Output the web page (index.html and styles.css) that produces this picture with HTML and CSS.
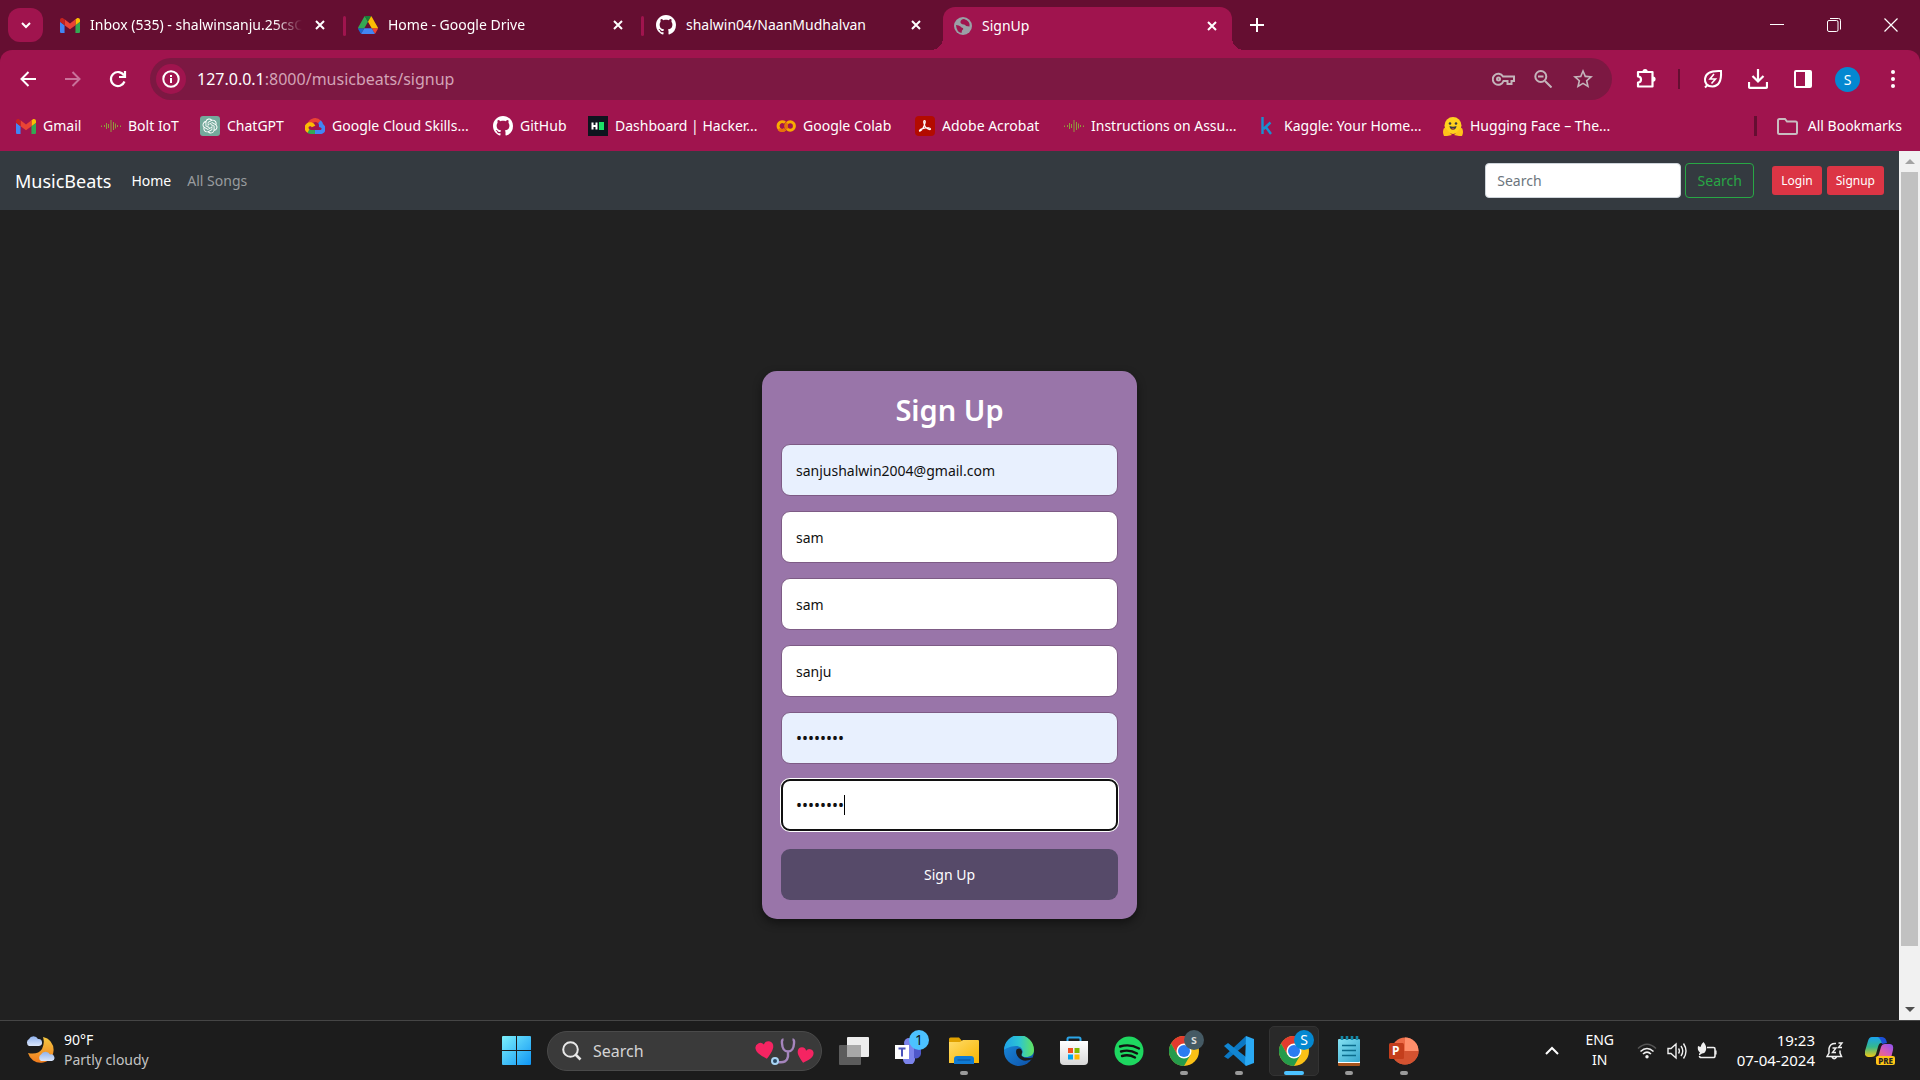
FILE: index.html
```
<!DOCTYPE html>
<html lang="en">
<head>
<meta charset="utf-8">
<meta name="viewport" content="width=device-width, initial-scale=1">
<title>SignUp</title>
<link rel="stylesheet" href="styles.css">
</head>
<body>

<svg class="defs" aria-hidden="true">
  <defs>
    <linearGradient id="g-win" x1="0" y1="0" x2="1" y2="1"><stop offset="0" stop-color="#7cf0fb"/><stop offset="1" stop-color="#0f95f5"/></linearGradient>
    <linearGradient id="g-moon" x1="0" y1="0" x2="0" y2="1"><stop offset="0" stop-color="#f5c842"/><stop offset="1" stop-color="#f07a1c"/></linearGradient>
    <linearGradient id="g-cloud" x1="0" y1="0" x2="0" y2="1"><stop offset="0" stop-color="#8fb2ee"/><stop offset="1" stop-color="#dbe6fb"/></linearGradient>
    <linearGradient id="g-edge" x1="0" y1="0" x2="1" y2="0"><stop offset="0" stop-color="#1fa2e8"/><stop offset="0.5" stop-color="#2cc4d4"/><stop offset="1" stop-color="#63e45c"/></linearGradient>
    <linearGradient id="g-edge2" x1="0" y1="0" x2="1" y2="1"><stop offset="0" stop-color="#1b8fdf"/><stop offset="1" stop-color="#0d4ea6"/></linearGradient>
    <linearGradient id="g-folder" x1="0" y1="0" x2="1" y2="1"><stop offset="0" stop-color="#ffdc6a"/><stop offset="1" stop-color="#f8b500"/></linearGradient>
    <linearGradient id="g-bag" x1="0" y1="0" x2="0" y2="1"><stop offset="0" stop-color="#ffffff"/><stop offset="1" stop-color="#d8d8d8"/></linearGradient>
    <linearGradient id="g-note" x1="0" y1="0" x2="1" y2="1"><stop offset="0" stop-color="#84e2f3"/><stop offset="1" stop-color="#36a5cc"/></linearGradient>
    <linearGradient id="g-cop1" x1="0" y1="0" x2="0" y2="1"><stop offset="0" stop-color="#1aa3ee"/><stop offset="0.5" stop-color="#35b98c"/><stop offset="1" stop-color="#f3c713"/></linearGradient>
    <linearGradient id="g-cop2" x1="1" y1="0" x2="0" y2="1"><stop offset="0" stop-color="#8b52f4"/><stop offset="0.5" stop-color="#d95cb4"/><stop offset="1" stop-color="#fb7d4b"/></linearGradient>
    <symbol id="i-close" viewBox="0 0 12 12"><path d="M2 2l8 8M10 2l-8 8" stroke="currentColor" stroke-width="2" fill="none"/></symbol>
    <symbol id="i-gmail" viewBox="52 42 88 66">
      <path fill="#4285f4" d="M58 108h14V74L52 59v43c0 3.32 2.69 6 6 6"/><path fill="#34a853" d="M120 108h14c3.32 0 6-2.69 6-6V59l-20 15"/>
      <path fill="#fbbc04" d="M120 48v26l20-15v-8c0-7.42-8.47-11.65-14.4-7.2"/><path fill="#ea4335" d="M72 74V48l24 18 24-18v26L96 92"/>
      <path fill="#c5221f" d="M52 51v8l20 15V48l-5.6-4.2c-5.94-4.45-14.4-.22-14.4 7.2"/>
    </symbol>
    <symbol id="i-github" viewBox="0 0 16 16"><path fill="#fff" d="M8 0C3.58 0 0 3.58 0 8c0 3.54 2.29 6.53 5.47 7.59.4.07.55-.17.55-.38 0-.19-.01-.82-.01-1.49-2.01.37-2.53-.49-2.69-.94-.09-.23-.48-.94-.82-1.13-.28-.15-.68-.52-.01-.53.63-.01 1.08.58 1.23.82.72 1.21 1.87.87 2.33.66.07-.52.28-.87.51-1.07-1.78-.2-3.64-.89-3.64-3.95 0-.87.31-1.59.82-2.15-.08-.2-.36-1.02.08-2.12 0 0 .67-.21 2.2.82.64-.18 1.32-.27 2-.27s1.36.09 2 .27c1.53-1.04 2.2-.82 2.2-.82.44 1.1.16 1.92.08 2.12.51.56.82 1.27.82 2.15 0 3.07-1.87 3.75-3.65 3.95.29.25.54.73.54 1.48 0 1.07-.01 1.93-.01 2.2 0 .21.15.46.55.38A8.01 8.01 0 0 0 16 8c0-4.42-3.58-8-8-8z"/></symbol>
    <symbol id="i-bolt" viewBox="0 0 20 12"><path d="M.5 5.500v1.500M3.500 5v2M5.500 3v6M7.500 4v4M10 0v12M12.500 2v8M14.500 3.500v5M16.500 5v2M19.500 5.500v1.500" stroke="#8f9b3c" stroke-width="1"/></symbol>
    <symbol id="i-chrome" viewBox="0 0 30 30">
      <circle cx="15" cy="15" r="15" fill="#fbc116"/>
      <path fill="#e33b2e" d="M2 7.5A15 15 0 0 1 28 7.5H15L8.5 18.7z"/>
      <path fill="#259b4b" d="M2 7.5A15 15 0 0 0 15 30L21.5 18.7 8.5 18.7z"/>
      <circle cx="15" cy="15" r="7.5" fill="#fff"/><circle cx="15" cy="15" r="6" fill="#2a7cf0"/>
    </symbol>
  </defs>
</svg>

<header class="browser">
  <div class="tabstrip">
    <button class="tab-search" aria-label="Search tabs"><svg width="12" height="12" viewBox="0 0 12 12"><path d="M2 4l4 4 4-4" fill="none" stroke="currentColor" stroke-width="2"/></svg></button>
    <div class="tab tab-divided">
      <svg class="tab-icon" width="20" height="15"><use href="#i-gmail"/></svg>
      <span class="tab-title">Inbox (535) - shalwinsanju.25csC</span>
      <button class="tab-close" aria-label="Close tab"><svg width="12" height="12"><use href="#i-close"/></svg></button>
    </div>
    <div class="tab tab-divided">
      <svg class="tab-icon" width="20" height="18" viewBox="0 0 87.3 78">
        <path fill="#1967d2" d="M6.6 66.85l3.85 6.65c.8 1.4 1.95 2.5 3.3 3.3l13.75-23.8h-27.5c0 1.55.4 3.1 1.2 4.5z"/>
        <path fill="#34a853" d="M43.65 25L29.9 1.2c-1.35.8-2.5 1.9-3.3 3.3L1.2 48.5A9.06 9.06 0 0 0 0 53h27.5z"/>
        <path fill="#ea4335" d="M73.55 76.8c1.35-.8 2.5-1.9 3.3-3.3l1.6-2.75L86.1 57.5c.8-1.4 1.2-2.95 1.2-4.5H59.8l5.85 11.5z"/>
        <path fill="#188038" d="M43.65 25L57.4 1.2C56.05.4 54.5 0 52.9 0H34.4c-1.6 0-3.15.45-4.5 1.2z"/>
        <path fill="#4285f4" d="M59.8 53H27.5L13.75 76.8c1.35.8 2.9 1.2 4.5 1.2h50.8c1.6 0 3.15-.45 4.5-1.2z"/>
        <path fill="#fbbc04" d="M73.4 26.5L60.7 4.5c-.8-1.4-1.95-2.5-3.3-3.3L43.65 25 59.8 53h27.45c0-1.55-.4-3.1-1.2-4.5z"/>
      </svg>
      <span class="tab-title">Home - Google Drive</span>
      <button class="tab-close" aria-label="Close tab"><svg width="12" height="12"><use href="#i-close"/></svg></button>
    </div>
    <div class="tab">
      <svg class="tab-icon" width="20" height="20"><use href="#i-github"/></svg>
      <span class="tab-title">shalwin04/NaanMudhalvan</span>
      <button class="tab-close" aria-label="Close tab"><svg width="12" height="12"><use href="#i-close"/></svg></button>
    </div>
    <div class="tab tab-active">
      <svg class="tab-icon" width="18" height="18" viewBox="0 0 18 18"><circle cx="9" cy="9" r="9" fill="#9aa0a6"/><path d="M2 8q3 0 4.500 1.500T9 11q1 1-1 2.500l-.5 2.500Q2.500 15 2 8zM10 2q-3 0-3.500 2.500T10 7.500q1.500 0 2 1.500l3.500.5Q16.500 4 10 2z" fill="#a0144e"/></svg>
      <span class="tab-title">SignUp</span>
      <button class="tab-close" aria-label="Close tab"><svg width="12" height="12"><use href="#i-close"/></svg></button>
    </div>
    <button class="new-tab" aria-label="New tab"><svg width="14" height="14" viewBox="0 0 14 14"><path d="M7 0v14M0 7h14" stroke="currentColor" stroke-width="2"/></svg></button>
    <div class="window-controls">
      <button aria-label="Minimise"><svg width="14" height="14" viewBox="0 0 14 14"><path d="M0 6.500h14" stroke="currentColor"/></svg></button>
      <button aria-label="Restore"><svg width="14" height="14" viewBox="0 0 14 14" fill="none" stroke="currentColor"><rect x="0.500" y="2.500" width="10.500" height="11" rx="1.500"/><path d="M3 .5h8.500a2 2 0 0 1 2 2V11.500"/></svg></button>
      <button aria-label="Close"><svg width="14" height="14" viewBox="0 0 14 14"><path d="M.5.5l13 13M13.500.5l-13 13" stroke="currentColor" stroke-width="1.200"/></svg></button>
    </div>
  </div>

  <div class="toolbar">
    <button class="tool" aria-label="Back"><svg width="16" height="16" viewBox="0 0 16 16" fill="none" stroke="currentColor" stroke-width="2"><path d="M16 8H2M8.500 1L1.500 8l7 7"/></svg></button>
    <button class="tool tool-dim" aria-label="Forward"><svg width="16" height="16" viewBox="0 0 16 16" fill="none" stroke="currentColor" stroke-width="2"><path d="M0 8h14M7.500 1l7 7-7 7"/></svg></button>
    <button class="tool" aria-label="Reload"><svg width="18" height="18" viewBox="0 0 18 18" fill="none" stroke="currentColor" stroke-width="2.200"><path d="M15.500 11.500A7 7 0 1 1 15 5.500M16 1v6h-6"/></svg></button>
    <div class="omnibox">
      <button class="site-info" aria-label="Site information"><svg width="18" height="18" viewBox="0 0 18 18"><circle cx="9" cy="9" r="7.700" fill="none" stroke="currentColor" stroke-width="2"/><path d="M9 8v5M9 5v2" stroke="currentColor" stroke-width="2"/></svg></button>
      <div class="url" role="textbox" aria-label="Address"><span class="url-host">127.0.0.1</span>:8000/musicbeats/signup</div>
      <button class="omni-btn" aria-label="Passwords"><svg width="23" height="14" viewBox="0 0 23 14" fill="none" stroke="currentColor" stroke-width="2"><path d="M11 4.500h11v4.500h-2.500v3h-4v-3H11.500A5.500 5.500 0 1 1 11 4.500z"/><circle cx="6.500" cy="7" r="1.500"/></svg></button>
      <button class="omni-btn" aria-label="Zoom"><svg width="18" height="18" viewBox="0 0 18 18" fill="none" stroke="currentColor" stroke-width="2"><circle cx="6.800" cy="6.500" r="5.500"/><path d="M11 11l6.500 6.500M4 6.500h5.500"/></svg></button>
      <button class="omni-btn" aria-label="Bookmark"><svg width="20" height="20" viewBox="2 2 20 20"><path fill="currentColor" d="M22 9.240l-7.190-.62L12 2 9.190 8.630 2 9.240l5.460 4.730L5.820 21 12 17.270 18.180 21l-1.630-7.030L22 9.240zM12 15.400l-3.760 2.270 1-4.280-3.320-2.880 4.380-.38L12 6.100l1.710 4.040 4.380.38-3.320 2.880 1 4.280L12 15.400z"/></svg></button>
    </div>
    <button class="tool tool-ext" aria-label="Extensions"><svg width="22" height="22" viewBox="0 0 22 22"><path d="M3 4h14.500v14.500H3v-4a3 3 0 0 0 0-6z" fill="none" stroke="currentColor" stroke-width="2.200" stroke-linejoin="round"/><path d="M7.500 3.500a2.600 2.600 0 0 1 5.200 0zM18 8.500a2.600 2.600 0 0 1 0 5.200z" fill="currentColor"/></svg></button>
    <span class="tool-divider"></span>
    <button class="tool" aria-label="Energy saver"><svg width="20" height="20" viewBox="0 0 20 20" fill="none" stroke="currentColor" stroke-width="2"><path d="M18 2c.5 8-1 15-8.500 15.500C4 17.500 1.500 14 2 10 2.500 4 9 1.500 18 2zM2 18.500l3-3"/><path d="M11 5l-4 5h5.500L8.500 14.500" stroke-width="1.600"/></svg></button>
    <button class="tool" aria-label="Downloads"><svg width="20" height="20" viewBox="0 0 20 20" fill="none" stroke="currentColor" stroke-width="2.200"><path d="M10 0v12M4.500 7l5.500 5.500L15.500 7M1 13v4.500a1.300 1.300 0 0 0 1.300 1.300h15.400a1.300 1.300 0 0 0 1.300-1.300V13"/></svg></button>
    <button class="tool" aria-label="Side panel"><svg width="18" height="18" viewBox="0 0 18 18"><rect x="1" y="1" width="16" height="16" rx="1" fill="none" stroke="currentColor" stroke-width="2"/><path d="M11 1h6v16h-6z" fill="currentColor"/></svg></button>
    <button class="tool" aria-label="Profile"><span class="avatar">S</span></button>
    <button class="tool" aria-label="Menu"><svg width="4" height="18" viewBox="0 0 4 18" fill="currentColor"><circle cx="2" cy="2" r="2"/><circle cx="2" cy="9" r="2"/><circle cx="2" cy="16" r="2"/></svg></button>
  </div>

  <nav class="bookmarks" aria-label="Bookmarks">
    <a href="#"><svg width="20" height="15"><use href="#i-gmail"/></svg>Gmail</a>
    <a href="#"><svg width="20" height="12"><use href="#i-bolt"/></svg>Bolt IoT</a>
    <a href="#"><svg width="20" height="20" viewBox="0 0 20 20"><rect width="20" height="20" rx="3" fill="#74aa9c"/><path fill="#fff" transform="translate(2.500 2.500) scale(.625)" d="M22.2819 9.8211a5.9847 5.9847 0 0 0-.5157-4.9108 6.0462 6.0462 0 0 0-6.5098-2.9A6.0651 6.0651 0 0 0 4.9807 4.1818a5.9847 5.9847 0 0 0-3.9977 2.9 6.0462 6.0462 0 0 0 .7427 7.0966 5.98 5.98 0 0 0 .511 4.9107 6.051 6.051 0 0 0 6.5146 2.9001A5.9847 5.9847 0 0 0 13.2599 24a6.0557 6.0557 0 0 0 5.7718-4.2058 5.9894 5.9894 0 0 0 3.9977-2.9001 6.0557 6.0557 0 0 0-.7475-7.0729zm-9.022 12.6081a4.4755 4.4755 0 0 1-2.8764-1.0408l.1419-.0804 4.7783-2.7582a.7948.7948 0 0 0 .3927-.6813v-6.7369l2.02 1.1686a.071.071 0 0 1 .038.052v5.5826a4.504 4.504 0 0 1-4.4945 4.4944zm-9.6607-4.1254a4.4708 4.4708 0 0 1-.5346-3.0137l.142.0852 4.783 2.7582a.7712.7712 0 0 0 .7806 0l5.8428-3.3685v2.3324a.0804.0804 0 0 1-.0332.0615L9.74 19.9502a4.4992 4.4992 0 0 1-6.1408-1.6464zM2.3408 7.8956a4.485 4.485 0 0 1 2.3655-1.9728V11.6a.7664.7664 0 0 0 .3879.6765l5.8144 3.3543-2.0201 1.1685a.0757.0757 0 0 1-.071 0l-4.8303-2.7865A4.504 4.504 0 0 1 2.3408 7.872zm16.5963 3.8558L13.1038 8.364 15.1192 7.2a.0757.0757 0 0 1 .071 0l4.8303 2.7913a4.4944 4.4944 0 0 1-.6765 8.1042v-5.6772a.79.79 0 0 0-.407-.667zm2.0107-3.0231l-.142-.0852-4.7735-2.7818a.7759.7759 0 0 0-.7854 0L9.409 9.2297V6.8974a.0662.0662 0 0 1 .0284-.0615l4.8303-2.7866a4.4992 4.4992 0 0 1 6.6802 4.66zM8.3065 12.863l-2.02-1.1638a.0804.0804 0 0 1-.038-.0567V6.0742a4.4992 4.4992 0 0 1 7.3757-3.4537l-.142.0805L8.704 5.459a.7948.7948 0 0 0-.3927.6813zm1.0976-2.3654l2.602-1.4998 2.6069 1.4998v2.9994l-2.5974 1.4997-2.6067-1.4997Z"/></svg>ChatGPT</a>
    <a href="#"><svg width="20" height="16" viewBox="0 0 20 16" fill="none" stroke-width="4"><path d="M4.500 6A6 6 0 0 1 14.500 4" stroke="#ea4335"/><path d="M14.500 3.700Q16 5 16 7.500A3.300 3.300 0 0 1 14.500 14H10" stroke="#4285f4"/><path d="M10 14H6a4 4 0 0 1-3-1.500" stroke="#34a853"/><path d="M3.500 13A3.600 3.600 0 1 1 8.500 8.500" stroke="#fbbc04"/></svg>Google Cloud Skills...</a>
    <a href="#"><svg width="20" height="20"><use href="#i-github"/></svg>GitHub</a>
    <a href="#"><svg width="20" height="20" viewBox="0 0 20 20"><rect width="20" height="20" fill="#0e141e"/><path d="M4.500 6.500v7M8.500 6.500v7M4 10h5" stroke="#fff" stroke-width="2"/><path d="M11 6h5v8h-5z" fill="#1be167"/></svg>Dashboard | Hacker...</a>
    <a href="#"><svg width="20" height="12" viewBox="0 0 20 12" fill="none" stroke-width="3"><circle cx="14.200" cy="6" r="4.200" stroke="#f9ab00"/><path d="M9 2.600A4.300 4.300 0 1 0 9 9.400" stroke="#f9ab00"/><path d="M11.200 9A4.200 4.200 0 0 1 11.200 3M2.800 9A4.300 4.300 0 0 0 9 9.400" stroke="#e8710a"/></svg>Google Colab</a>
    <a href="#"><svg width="20" height="20" viewBox="0 0 20 20"><rect width="20" height="20" rx="4" fill="#b30b00"/><path d="M9.500 4.500c1.500 0 .5 4-1.500 7.500-1.500 2.500-3 3.500-3.500 3-.8-1 3.500-3 6-3.200 2-.2 5 .2 5 1.200 0 1.500-3.500 0-5-2-1.500-2-2.500-6.500-1-6.500z" fill="none" stroke="#fff" stroke-width="1.200"/></svg>Adobe Acrobat</a>
    <a href="#"><svg width="20" height="12"><use href="#i-bolt"/></svg>Instructions on Assu...</a>
    <a href="#"><svg width="20" height="20" viewBox="0 0 20 20"><path d="M5.500 1v17M13.500 6.500l-7 6.500M8.500 10.500l5.500 7.500" stroke="#1a8fd0" stroke-width="2.400" fill="none"/></svg>Kaggle: Your Home...</a>
    <a href="#"><svg width="20" height="19" viewBox="0 0 20 19"><circle cx="10" cy="8.500" r="8.500" fill="#ffd21e"/><path d="M1 11q2 0 5 4l3 3-5 1H1q-2-4 0-8zM19 11q-2 0-5 4l-3 3 5 1h3q2-4 0-8z" fill="#ffc21a"/><circle cx="7" cy="6.500" r="1.300" fill="#3a3b45"/><circle cx="13" cy="6.500" r="1.300" fill="#3a3b45"/><path d="M6.500 9q3.500 1.500 7 0-.5 3.800-3.500 3.800T6.500 9z" fill="#3a3b45"/><path d="M8.500 11.800q1.500-1 3 0-1.500 1.500-3 0z" fill="#f04e3e"/></svg>Hugging Face – The...</a>
    <a href="#" class="all-bookmarks"><svg width="21" height="17" viewBox="0 0 21 17"><path d="M1 2.500A1.500 1.500 0 0 1 2.500 1H8l2 2.500h8.500A1.500 1.500 0 0 1 20 5v9.500a1.500 1.500 0 0 1-1.500 1.500h-16A1.500 1.500 0 0 1 1 14.500z" fill="none" stroke="#c9bcc0" stroke-width="2"/></svg>All Bookmarks</a>
  </nav>
</header>

<div class="viewport">
  <div class="page">
    <nav class="navbar">
      <a href="#" class="brand">MusicBeats</a>
      <a href="#" class="nav-link nav-active">Home</a>
      <a href="#" class="nav-link">All Songs</a>
      <form class="nav-search">
        <input type="search" placeholder="Search" aria-label="Search">
        <button type="button" class="btn-outline">Search</button>
      </form>
      <div class="nav-auth">
        <button class="btn-danger">Login</button>
        <button class="btn-danger">Signup</button>
      </div>
    </nav>
    <main class="content">
      <form class="card">
        <h1>Sign Up</h1>
        <div class="fields">
          <input class="field field-filled" type="email" aria-label="Email" value="sanjushalwin2004@gmail.com">
          <input class="field" type="text" aria-label="Username" value="sam">
          <input class="field" type="text" aria-label="First name" value="sam">
          <input class="field" type="text" aria-label="Last name" value="sanju">
          <input class="field field-filled field-password" type="password" aria-label="Password" value="password">
          <div class="field-wrap">
            <input class="field field-password field-focused" type="password" aria-label="Confirm password" value="password">
            <span class="caret"></span>
          </div>
        </div>
        <button type="button" class="submit">Sign Up</button>
      </form>
    </main>
  </div>
  <div class="scrollbar" aria-hidden="true">
    <svg width="10" height="21" viewBox="0 0 10 21"><path d="M0 13l5-5 5 5z" fill="#a3a3a3"/></svg>
    <div class="scroll-track"><div class="scroll-thumb"></div></div>
    <svg width="10" height="21" viewBox="0 0 10 21"><path d="M0 8l5 5 5-5z" fill="#505050"/></svg>
  </div>
</div>

<footer class="taskbar">
  <button class="weather">
    <svg width="30" height="28" viewBox="0 0 30 28"><path d="M18 2A13 13 0 1 1 3 18q10 2 14-4 3-6 1-12z" fill="url(#g-moon)"/><path d="M4 11a4 4 0 0 1 0-7 5 5 0 0 1 9 0 3.500 3.500 0 0 1 1 7z" fill="url(#g-cloud)"/><path d="M16 26a3.800 3.800 0 0 1 0-6.500 5 5 0 0 1 9 0 3.300 3.300 0 0 1 2 6.500z" fill="url(#g-cloud)"/></svg>
    <span class="weather-text"><span>90°F</span><span class="muted">Partly cloudy</span></span>
  </button>

  <div class="apps">
    <button class="app" aria-label="Start"><svg width="29" height="29" viewBox="0 0 29 29"><path fill="url(#g-win)" d="M1 0h13v14H0V1a1 1 0 0 1 1-1zM15 0h13a1 1 0 0 1 1 1v13H15zM0 15h14v14H1a1 1 0 0 1-1-1zM15 15h14v13a1 1 0 0 1-1 1H15z"/></svg></button>
    <button class="search-pill">
      <svg width="20" height="20" viewBox="0 0 20 20" fill="none" stroke="#e8e8e8" stroke-width="2"><circle cx="8.500" cy="8.500" r="7.300" fill="#4a4a4a"/><path d="M13.500 13.500l5 5" stroke-width="2.600"/></svg>
      <span>Search</span>
      <svg class="pill-art" width="60" height="28" viewBox="0 0 60 28"><g fill="#f52462"><path transform="rotate(-12 10 13)" d="M10 22C3 16 1 13 1 9.500A4.800 4.800 0 0 1 10 7.500 4.800 4.800 0 0 1 19 9.500C19 13 17 16 10 22z"/><path transform="rotate(14 50 18)" d="M50 26c-6-5-8-7.500-8-10.800a4.200 4.200 0 0 1 8-1.700 4.200 4.200 0 0 1 8 1.700c0 3.300-2 5.800-8 10.800z"/></g><path d="M28.500 2.500q-2 0-1.500 4 .5 8 6 8t6-8q.5-4-1.500-4M33 14.500v5q-1 7-10 5.500" fill="none" stroke="#a585bd" stroke-width="2.400"/><circle cx="20" cy="24" r="3" fill="#2a4a66" stroke="#a8d4f4" stroke-width="2"/></svg>
    </button>
    <button class="app" aria-label="Task view"><svg width="30" height="28" viewBox="0 0 30 28"><rect x="8" width="22" height="20" rx="1" fill="#ededed"/><rect y="8" width="22" height="20" rx="1" fill="#5c5c5c"/><path d="M8 8h14v12H8z" fill="#a8a8a8"/></svg></button>
    <button class="app" aria-label="Teams"><svg width="30" height="26" viewBox="0 0 30 26"><circle cx="15" cy="5" r="5" fill="#7b83eb"/><path d="M9 8h12v12a6 6 0 0 1-12 2z" fill="#7b83eb"/><path d="M20 8h7v8a5 5 0 0 1-7 4z" fill="#4f58ca"/><rect x="1" y="7" width="14" height="14" fill="#fff"/><path d="M4.500 10.500h7M8 10.500v8" stroke="#4b53bc" stroke-width="2"/></svg><span class="badge badge-count">1</span></button>
    <button class="app app-open" aria-label="File Explorer"><svg width="30" height="28" viewBox="0 0 30 28"><path d="M0 2a1.500 1.500 0 0 1 1.500-1.500H10L13 4h15a1.500 1.500 0 0 1 1.500 1.500V10H0z" fill="#e0a100"/><path d="M0 5h11l3-2h15a1 1 0 0 1 1 1v22H0z" fill="url(#g-folder)"/><path d="M5 27v-5a3 3 0 0 1 3-3h14a3 3 0 0 1 3 3v5z" fill="#0f7bd4"/><path d="M8.500 23h13" stroke="#0a4f96"/></svg></button>
    <button class="app" aria-label="Edge"><svg width="30" height="30" viewBox="0 0 30 30"><circle cx="15" cy="15" r="15" fill="url(#g-edge2)"/><path d="M0 14A15 15 0 0 1 30 14c0 5-4 7-8 7-3 0-5-1-4-3 2-4-1-8-6-8-6 0-11 3-12 4z" fill="url(#g-edge)"/><path d="M12.500 13.500q4-2.500 5.500 1.500c.8 2-1.500 3.500 0 5.200q3.500 3 10.500 1.300l-1 2q-9 3-13-2-3.500-4-2-8z" fill="#1c1c1c"/></svg></button>
    <button class="app" aria-label="Microsoft Store"><svg width="30" height="30" viewBox="0 0 30 30"><path d="M8.500 7V3a1.500 1.500 0 0 1 1.500-1.500h10A1.500 1.500 0 0 1 21.500 3v4" fill="none" stroke="#2ba5e8" stroke-width="2"/><path d="M1 5h28v20a4 4 0 0 1-4 4H5a4 4 0 0 1-4-4z" fill="url(#g-bag)"/><path d="M9 12h5v5H9z" fill="#f25022"/><path d="M15.500 12h5v5h-5z" fill="#7fba00"/><path d="M9 18.500h5v5H9z" fill="#00a4ef"/><path d="M15.500 18.500h5v5h-5z" fill="#ffb900"/></svg></button>
    <button class="app" aria-label="Spotify"><svg width="30" height="30" viewBox="0 0 30 30"><circle cx="15" cy="15" r="14.500" fill="#1ed760"/><path d="M6 10.500q10-3 19 2M7 15.500q8.500-2.500 16 2M8 20q7-2 13 1.500" fill="none" stroke="#111" stroke-width="2.400" stroke-linecap="round"/></svg></button>
    <button class="app app-open" aria-label="Chrome"><svg width="30" height="30"><use href="#i-chrome"/></svg><span class="badge badge-grey">s</span></button>
    <button class="app app-open" aria-label="Visual Studio Code"><svg width="30" height="30" viewBox="0 0 30 30"><path d="M0 20.500L22 0v8L4 23z" fill="#0b77c2"/><path d="M4 7l18 14v9L0 10z" fill="#1186d3"/><path d="M22 0l8 3v24l-8 3-1-2z" fill="#2aa9f3"/></svg></button>
    <button class="app app-current" aria-label="Chrome, active"><svg width="30" height="30"><use href="#i-chrome"/></svg><span class="badge badge-blue">S</span></button>
    <button class="app app-open" aria-label="Notepad"><svg width="22" height="30" viewBox="0 0 22 30"><rect y="24" width="22" height="6" rx="1" fill="#a8541c"/><path d="M0 24h22v3H0z" fill="#fff"/><rect y="3" width="22" height="23" rx="1" fill="url(#g-note)"/><path d="M4 9.500h14M4 14.500h14M4 19.500h14" stroke="#0b6c8c" stroke-width="1.600"/><path d="M4 0v4M9 0v4M14 0v4M19 0v4" stroke="#1389a8" stroke-width="2.600"/></svg></button>
    <button class="app app-open" aria-label="PowerPoint"><svg width="30" height="30" viewBox="0 0 30 30"><circle cx="16" cy="15" r="13.500" fill="#ed6c47"/><path d="M16 1.500A13.500 13.500 0 0 1 29.500 15H16z" fill="#ff8f6b"/><path d="M2.500 15h27a13.500 13.500 0 0 1-27 0z" fill="#d35230"/><rect y="7" width="15" height="16" rx="1.500" fill="#c43e1c"/><text class="ppt-letter" x="3" y="19">P</text></svg></button>
  </div>

  <div class="tray">
    <button class="tray-up" aria-label="Hidden icons"><svg width="14" height="9" viewBox="0 0 14 9"><path d="M1 8l6-6 6 6" fill="none" stroke="#fff" stroke-width="2"/></svg></button>
    <span class="lang"><span>ENG</span><span>IN</span></span>
    <button class="status" aria-label="Network, volume, battery">
      <svg width="20" height="16" viewBox="0 0 20 16" fill="none" stroke="#f0f0f0" stroke-width="1.600"><path d="M1 5.500q9-8.500 18 0" stroke="#555"/><path d="M3.500 8.500q6.500-6 13 0M6 11q4-3.800 8 0"/><circle cx="10" cy="13.800" r="1.700" fill="#f0f0f0" stroke="none"/></svg>
      <svg width="20" height="18" viewBox="0 0 20 18" fill="none" stroke="#f0f0f0" stroke-width="1.400"><path d="M1 6.500h3L9 2v14L4 11.500H1zM11.500 6.500q1.800 2.500 0 5M14 4q3.500 5 0 10M16.500 1.500q5 7.500 0 15"/></svg>
      <svg width="20" height="18" viewBox="0 0 20 18"><path d="M10 5.500h6.500a1.500 1.500 0 0 1 1.500 1.500v7a1.500 1.500 0 0 1-1.500 1.500H4A1.500 1.500 0 0 1 2.500 14M18.800 8.500v4" fill="none" stroke="#f0f0f0" stroke-width="1.600"/><path d="M6.500 0Q10 4 9 8q-1 3.500-4 3.500l-3 2q-.5-1.500 1-3Q0 8 1 4l2.500 1Q4 2 6.500 0z" fill="#f0f0f0"/></svg>
    </button>
    <span class="clock"><span>19:23</span><span>07-04-2024</span></span>
    <svg class="bell" width="18" height="18" viewBox="0 0 18 18" fill="none" stroke="#f0f0f0" stroke-width="1.500"><path d="M10 1.500q-6-.5-7 5V11l-2 3.500h14.500L14 11V8.500M6 15q2.200 3.500 4.500 0"/><path d="M6.500 6h3.500L6.500 10.500h3.500M12.500 1H16l-3.500 4.500H16" stroke-width="1.400"/></svg>
    <button class="copilot" aria-label="Copilot"><svg width="30" height="28" viewBox="0 0 30 28"><path d="M7 0h8q4 0 6 6h-5q-2 0-3 4l-2 7q-1 3-5 3H3q-4 0-3-6l3-10q1-4 4-4z" fill="url(#g-cop1)"/><path d="M13 0h4q4 0 5 6l-5 1q-1-5-4-7z" fill="#1b50d8"/><path d="M20 7h5q4 0 3 6l-2 8H9q4 0 5-4l2-7q1-3 4-3z" fill="url(#g-cop2)"/></svg><span class="pre">PRE</span></button>
  </div>
</footer>

</body>
</html>
```
FILE: styles.css
```
* { box-sizing: border-box; }

body {
  margin: 0;
  min-height: 100vh;
  display: flex;
  flex-direction: column;
  background: #212121;
  color: #fff;
  font: 14px/20px "Noto Sans", "Open Sans", sans-serif;
}

button, input { font: inherit; color: inherit; margin: 0; }
button { background: none; border: 0; padding: 0; cursor: pointer; }
a { color: inherit; text-decoration: none; }
svg { flex: none; display: block; }
.defs { position: absolute; width: 0; height: 0; }

/* Browser window */
.browser { background: #650e31; }

.tabstrip { display: flex; align-items: center; height: 50px; padding-left: 8px; }
.tab-search {
  display: grid;
  place-items: center;
  width: 35px;
  height: 34px;
  margin-right: 3px;
  border-radius: 12px;
  background: #a0144e;
}
.tab {
  position: relative;
  display: flex;
  align-items: center;
  flex: 0 1 298px;
  min-width: 0;
  height: 43px;
  padding: 0 18px 0 14px;
}
.tab-icon { margin-right: 10px; }
.tab-title {
  flex: 1;
  min-width: 0;
  overflow: hidden;
  white-space: nowrap;
  margin-right: 8px;
}
.tab-divided .tab-title {
  -webkit-mask-image: linear-gradient(to left, transparent 4px, #000 32px);
  mask-image: linear-gradient(to left, transparent 4px, #000 32px);
}
.tab-divided::after {
  content: "";
  position: absolute;
  right: -2px;
  top: 12px;
  width: 3px;
  height: 20px;
  border-radius: 2px;
  background: #a0144e;
}
.tab-active {
  align-self: flex-end;
  flex-basis: 289px;
  margin: 0 4px 0 3px;
  padding: 0 14px 6px 11px;
  border-radius: 12px 12px 0 0;
  background: #a0144e;
}
.tab-active::before, .tab-active::after {
  content: "";
  position: absolute;
  bottom: 0;
  width: 12px;
  height: 12px;
}
.tab-active::before { left: -12px; background: radial-gradient(circle at 0 0, transparent 12px, #a0144e 12px); }
.tab-active::after { right: -12px; background: radial-gradient(circle at 100% 0, transparent 12px, #a0144e 12px); }
.new-tab { display: grid; place-items: center; width: 42px; height: 34px; }
.window-controls { display: flex; margin-left: auto; padding-right: 1px; }
.window-controls button { display: grid; place-items: center; width: 57px; height: 48px; }

.toolbar {
  display: flex;
  align-items: center;
  height: 58px;
  padding: 0 5px;
  border-radius: 12px 12px 0 0;
  background: #a0144e;
}
.tool { display: grid; place-items: center; width: 45px; height: 42px; }
.tool-dim { color: #c9729a; }
.tool-ext { margin-left: 11px; }
.tool-divider { width: 2px; height: 20px; margin: 0 10px; background: #650e31; }
.avatar {
  width: 25px;
  height: 25px;
  border-radius: 50%;
  background: #0488d1;
  text-align: center;
  line-height: 25px;
}
.omnibox {
  display: flex;
  align-items: center;
  flex: 1;
  height: 42px;
  margin-left: 10px;
  padding: 0 9px 0 6px;
  border-radius: 21px;
  background: #7c1842;
}
.site-info { display: grid; place-items: center; width: 30px; height: 30px; border-radius: 50%; background: #a0144e; }
.url { flex: 1; margin-left: 11px; font-size: 16px; color: #d3a3b6; }
.url-host { color: #fff; }
.omni-btn { display: grid; place-items: center; width: 40px; height: 40px; color: #c4b4ba; }

.bookmarks {
  display: grid;
  grid-template-columns: 85px 99px 105px 188px 95px 188px 139px 149px 193px 186px auto 1fr;
  align-items: center;
  height: 43px;
  padding: 0 18px 7px 16px;
  background: #a0144e;
}
.bookmarks a { display: flex; align-items: center; gap: 7px; white-space: nowrap; }
.bookmarks .all-bookmarks { gap: 10px; justify-self: end; padding-left: 20px; border-left: 3px solid #650e31; }

/* Web page */
.viewport { display: flex; flex: 1; }
.page { display: flex; flex-direction: column; flex: 1; }

.navbar { display: flex; align-items: center; height: 59px; padding: 0 15px; background: #343a40; }
.brand { margin-right: 20px; font-size: 18px; }
.nav-link { margin-right: 16px; color: #999c9f; }
.nav-active { color: #fff; }
.nav-search { display: flex; gap: 4px; margin-left: auto; }
.nav-search input {
  width: 196px;
  height: 35px;
  padding: 0 11px;
  border: 1px solid #ced4da;
  border-radius: 4px;
  background: #fff;
  color: #495057;
}
.nav-search input::placeholder { color: #6c757d; opacity: 1; }
.btn-outline { width: 69px; height: 35px; border: 1px solid #28a745; border-radius: 4px; color: #28a745; }
.nav-auth { display: flex; gap: 5px; margin-left: 18px; font-size: 12px; }
.btn-danger { height: 29px; padding: 0 9px; border-radius: 3px; background: #dc3545; }

.content { display: flex; flex: 1; align-items: center; justify-content: center; padding-top: 60px; }
.card {
  display: flex;
  flex-direction: column;
  width: 375px;
  padding: 19px;
  border-radius: 15px;
  background: #9975a9;
  box-shadow: 0 4px 10px rgba(0, 0, 0, 0.45);
}
.card h1 { margin: 0 0 14px; font-size: 29px; line-height: 40px; font-weight: 600; text-align: center; }
.fields { display: grid; gap: 15px; }
.field {
  display: block;
  width: 100%;
  height: 52px;
  padding: 0 14px;
  border: 1px solid #7d5b85;
  border-radius: 9px;
  outline: 0;
  background: #fff;
  color: #111;
}
.field-filled { background: #e8f0fe; }
.field-password { font-size: 16px; }
.field-wrap { position: relative; }
.field-focused { border: 2px solid #101010; padding: 0 13px; box-shadow: 0 0 0 1px #fff; }
.caret { position: absolute; left: 63px; top: 16px; width: 1px; height: 20px; background: #000; }
.submit { height: 51px; margin-top: 18px; border-radius: 9px; background: #564a69; }

.scrollbar { display: flex; flex-direction: column; align-items: center; width: 21px; background: #f1f1f1; }
.scroll-track { display: flex; flex-direction: column; flex: 1; align-self: stretch; padding: 0 2px 53px; }
.scroll-thumb { flex: 1; background: #c1c1c1; }

/* Taskbar */
.taskbar {
  display: grid;
  grid-template-columns: 1fr auto 1fr;
  align-items: center;
  height: 60px;
  border-top: 1px solid #454545;
  background: #1c1c1c;
}
.weather { display: flex; align-items: center; gap: 9px; padding-left: 25px; text-align: left; }
.weather svg { margin-bottom: 4px; }
.weather-text, .lang, .clock { display: flex; flex-direction: column; padding-bottom: 2px; }
.muted { color: #c3c3c3; }
.apps { display: flex; align-items: center; }
.app { position: relative; display: grid; place-items: center; width: 55px; height: 50px; }
.app-open::after, .app-current::after {
  content: "";
  position: absolute;
  bottom: 1px;
  left: 50%;
  width: 8px;
  height: 4px;
  margin-left: -4px;
  border-radius: 2px;
  background: #9a9a9a;
}
.app-current { width: 50px; margin: 0 2px 0 3px; border: 1px solid #333; border-radius: 5px; background: #292929; }
.app-current::after { bottom: 0; width: 20px; margin-left: -10px; background: #4cc2ff; }
.badge {
  position: absolute;
  right: 7px;
  top: 4px;
  width: 20px;
  height: 20px;
  border-radius: 50%;
  line-height: 20px;
  text-align: center;
}
.badge-count { background: #4cc2ff; color: #111; }
.badge-grey { background: #455a64; color: #ddd; font-size: 12px; font-weight: 600; }
.badge-blue { right: 4px; top: 3px; background: #0488d1; }
.ppt-letter { fill: #fff; font: 700 12px "Noto Sans", sans-serif; }
.search-pill {
  display: flex;
  align-items: center;
  width: 275px;
  height: 40px;
  margin: 0 4px 0 3px;
  padding: 0 6px 0 14px;
  border: 1px solid #4a4a4a;
  border-radius: 20px;
  background: #3a3a3a;
  color: #d4d4d4;
  font-size: 16px;
}
.search-pill span { margin-left: 11px; }
.pill-art { margin-left: auto; }

.tray { display: flex; align-items: center; justify-content: flex-end; padding-right: 25px; }
.tray-up { width: 14px; }
.lang { width: 30px; margin-left: 26px; text-align: center; }
.status { display: flex; align-items: center; gap: 10px; margin-left: 22px; }
.clock { margin-left: 20px; font-size: 15px; text-align: right; }
.bell { margin-left: 11px; }
.copilot { position: relative; margin-left: 21px; }
.pre {
  position: absolute;
  right: 0;
  bottom: 0;
  padding: 0 2px;
  border-radius: 2px;
  background: #ffc516;
  color: #222;
  font-size: 8px;
  line-height: 9px;
  font-weight: 800;
}
```
